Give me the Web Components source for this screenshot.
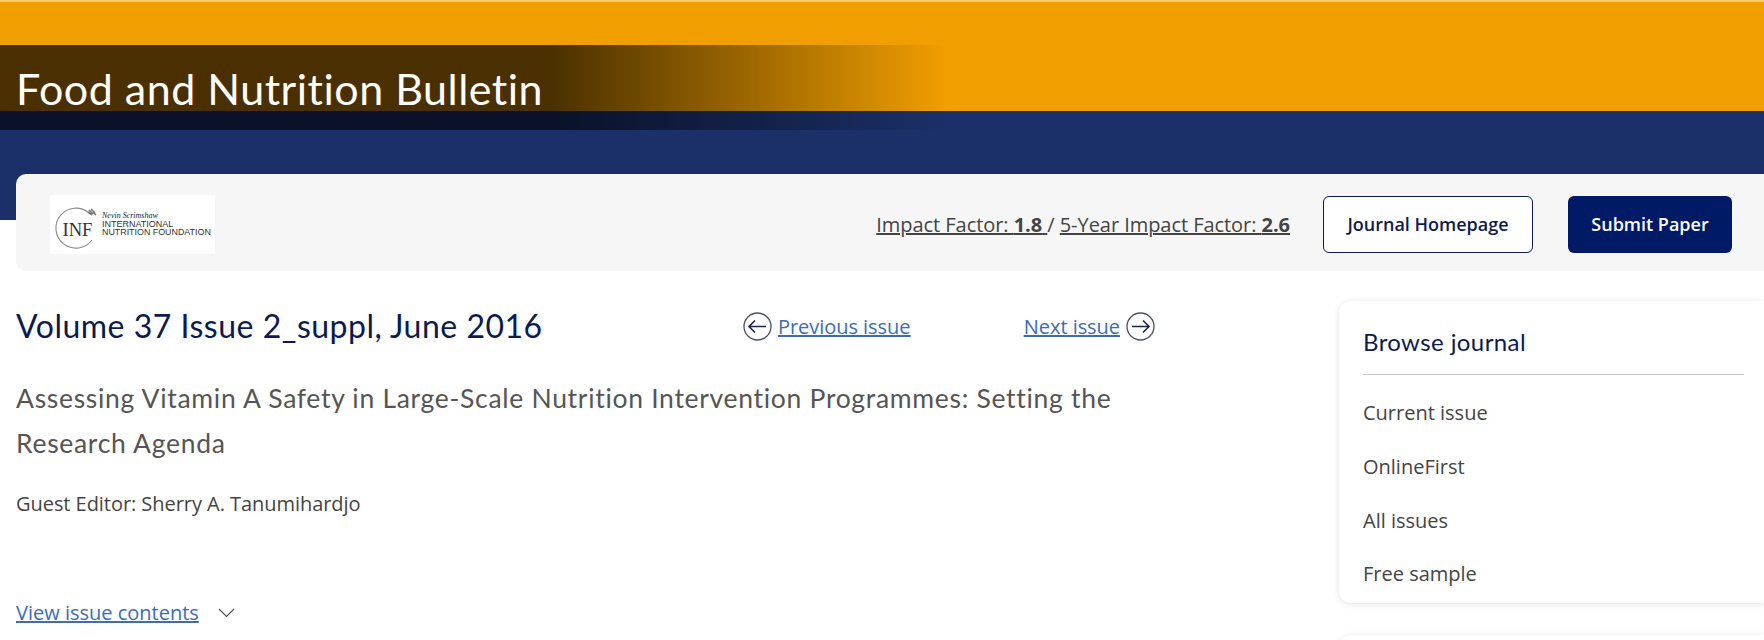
<!DOCTYPE html>
<html lang="en">
<head>
<meta charset="utf-8">
<title>Food and Nutrition Bulletin</title>
<style>
  html, body { margin: 0; padding: 0; background: #fff; overflow: hidden; height: 640px; }
  body { font-family: "Open Sans", "Liberation Sans", sans-serif; color: #333; }
</style>
</head>
<body>
<journal-banner>Food and Nutrition Bulletin</journal-banner>
<journal-toolbar></journal-toolbar>
<issue-page>
  <issue-head slot="main"></issue-head>
  <browse-card slot="side"></browse-card>
  <side-card slot="side"></side-card>
</issue-page>

<script>
class JournalBanner extends HTMLElement {
  constructor() {
    super();
    const shadow = this.attachShadow({ mode: 'open' });
    shadow.innerHTML = `
      <style>
        :host { display: block; height: 220px; background: #1b3068; }
        .orange { height: 43px; background: #f09e00; border-top: 2px solid #f5cc70; }
        .title {
          height: 66px;
          background: linear-gradient(90deg, #4a3000 0, #4a3000 550px, #f09e00 945px);
          display: flex;
          align-items: flex-end;
          padding-left: 16px;
          color: #fff;
          font: 400 43px/45px "Lato", "Open Sans", sans-serif;
          letter-spacing: .5px;
        }
        .shade { height: 19px; background: linear-gradient(90deg, #0a1128 0, #0a1128 550px, #1b3068 945px); }
      </style>
      <div class="orange"></div>
      <div class="title"><slot></slot></div>
      <div class="shade"></div>
    `;
  }
}

class JournalToolbar extends HTMLElement {
  constructor() {
    super();
    const shadow = this.attachShadow({ mode: 'open' });
    shadow.innerHTML = `
      <style>
        :host {
          display: flex;
          align-items: center;
          box-sizing: border-box;
          height: 97px;
          margin: -46px 0 0 16px;
          padding: 3px 32px 0 34px;
          background: #f6f6f6;
          border-radius: 10px 0 0 10px;
          position: relative;
          font-family: "Open Sans", sans-serif;
        }
        .logo { width: 165px; height: 59px; background: #fff; display: block; }
        .metrics { margin-left: auto; font-size: 20px; letter-spacing: -.05px; color: #444; }
        .metrics a { color: inherit; text-decoration: underline; }
        .btn {
          box-sizing: border-box;
          height: 57px;
          display: flex;
          align-items: center;
          justify-content: center;
          border-radius: 6px;
          font-size: 18px;
          font-weight: 600;
          text-decoration: none;
        }
        .home { width: 210px; margin-left: 33px; background: #fff; color: #0e1b4d; border: 1px solid #0e1b4d; }
        .submit { width: 164px; margin-left: 35px; background: #001a66; color: #fff; }
      </style>
      <svg class="logo" viewBox="0 0 165 59">
        <path d="M39 18 A20 20 0 1 0 42 45" fill="none" stroke="#8a8a8a" stroke-width="1.1"/>
        <path d="M38 17 l4 3 M39 15 l4 4 M41 14 l4 4 M43 17 l3 3" stroke="#777" stroke-width="1.6"/>
        <text x="12.5" y="41" font-family="Liberation Serif" font-size="18.6" fill="#333">INF</text>
        <text x="52" y="23" font-family="Liberation Serif" font-style="italic" font-size="8" fill="#222">Nevin Scrimshaw</text>
        <text x="52" y="32" font-family="Liberation Sans" font-size="9" fill="#333">INTERNATIONAL</text>
        <text x="52" y="40" font-family="Liberation Sans" font-size="8.9" fill="#333">NUTRITION FOUNDATION</text>
      </svg>
      <div class="metrics"><a href="#">Impact Factor: <b>1.8</b> </a>/ <a href="#">5-Year Impact Factor: <b>2.6</b></a></div>
      <a class="btn home" href="#">Journal Homepage</a>
      <a class="btn submit" href="#">Submit Paper</a>
    `;
  }
}

class IssuePage extends HTMLElement {
  constructor() {
    super();
    const shadow = this.attachShadow({ mode: 'open' });
    shadow.innerHTML = `
      <style>
        :host {
          display: grid;
          grid-template-columns: 1139px 1fr;
          column-gap: 184px;
          box-sizing: border-box;
          height: 369px;
          overflow: hidden;
          padding: 27px 0 0 16px;
        }
      </style>
      <div><slot name="main"></slot></div>
      <div><slot name="side"></slot></div>
    `;
  }
}

class IssueHead extends HTMLElement {
  constructor() {
    super();
    const shadow = this.attachShadow({ mode: 'open' });
    shadow.innerHTML = `
      <style>
        :host { display: block; font-family: "Open Sans", sans-serif; }
        .top { display: flex; align-items: center; height: 56px; }
        h1 { margin: 0; font: 400 32px/44px "Lato", sans-serif; color: #0b1a50; letter-spacing: .5px; }
        nav { margin-left: auto; width: 412px; display: flex; justify-content: space-between; font-size: 20px; letter-spacing: -.05px; }
        nav a { display: flex; align-items: center; gap: 6px; }
        a { color: #3b6cb7; }
        nav span { text-decoration: underline; }
        svg { display: block; }
        h2 { margin: 22px 0 0; font: 400 26.5px/45px "Lato", sans-serif; color: #555; letter-spacing: .7px; }
        p { margin: 23px 0 0; font-size: 20px; line-height: 30px; letter-spacing: -.05px; color: #444; }
        .toggle { display: flex; align-items: center; gap: 19px; margin-top: 80px; font-size: 20px; }
      </style>
      <div class="top">
        <h1>Volume 37 Issue 2_suppl, June 2016</h1>
        <nav>
          <a href="#">
            <svg width="29" height="29" viewBox="0 0 29 29" fill="none" stroke="#1a2350"><circle cx="14.5" cy="14.5" r="13.5" stroke="#4a4f6a" stroke-width="1.3"/><path d="M23 14.5H6M12 8.5l-6 6 6 6" stroke-width="1.6"/></svg>
            <span>Previous issue</span>
          </a>
          <a href="#">
            <span>Next issue</span>
            <svg width="29" height="29" viewBox="0 0 29 29" fill="none" stroke="#1a2350"><circle cx="14.5" cy="14.5" r="13.5" stroke="#4a4f6a" stroke-width="1.3"/><path d="M6 14.5H23M17 8.5l6 6-6 6" stroke-width="1.6"/></svg>
          </a>
        </nav>
      </div>
      <h2>Assessing Vitamin A Safety in Large-Scale Nutrition Intervention Programmes: Setting the Research Agenda</h2>
      <p>Guest Editor: Sherry A. Tanumihardjo</p>
      <div class="toggle">
        <a href="#">View issue contents</a>
        <svg width="17" height="10" viewBox="0 0 17 10" fill="none" stroke="#555" stroke-width="1.2"><path d="M1 1l7.5 7.5L16 1"/></svg>
      </div>
    `;
  }
}

class BrowseCard extends HTMLElement {
  constructor() {
    super();
    const shadow = this.attachShadow({ mode: 'open' });
    shadow.innerHTML = `
      <style>
        :host {
          display: block;
          box-sizing: border-box;
          height: 302px;
          margin-top: 3px;
          padding: 25px 20px 0 24px;
          background: #fff;
          border-radius: 12px 0 0 12px;
          box-shadow: 0 1px 6px rgba(0,0,0,.12);
          font-family: "Open Sans", sans-serif;
        }
        h3 { margin: 0; padding-bottom: 16px; font: 400 24px/32px "Lato", sans-serif; color: #0b1a50; border-bottom: 1px solid #c4c4c4; letter-spacing: .4px; }
        ul { list-style: none; margin: 11px 0 0; padding: 0; }
        li { height: 53.7px; display: flex; align-items: center; font-size: 20px; color: #444; }
      </style>
      <h3>Browse journal</h3>
      <ul>
        <li>Current issue</li>
        <li>OnlineFirst</li>
        <li>All issues</li>
        <li>Free sample</li>
      </ul>
    `;
  }
}

class SideCard extends HTMLElement {
  constructor() {
    super();
    const shadow = this.attachShadow({ mode: 'open' });
    shadow.innerHTML = `
      <style>
        :host {
          display: block;
          height: 30px;
          margin-top: 32px;
          background: #fff;
          border-radius: 12px 0 0 12px;
          box-shadow: 0 1px 6px rgba(0,0,0,.12);
        }
      </style>
      <slot></slot>
    `;
  }
}

customElements.define('journal-banner', JournalBanner);
customElements.define('journal-toolbar', JournalToolbar);
customElements.define('issue-page', IssuePage);
customElements.define('issue-head', IssueHead);
customElements.define('browse-card', BrowseCard);
customElements.define('side-card', SideCard);
</script>
</body>
</html>
